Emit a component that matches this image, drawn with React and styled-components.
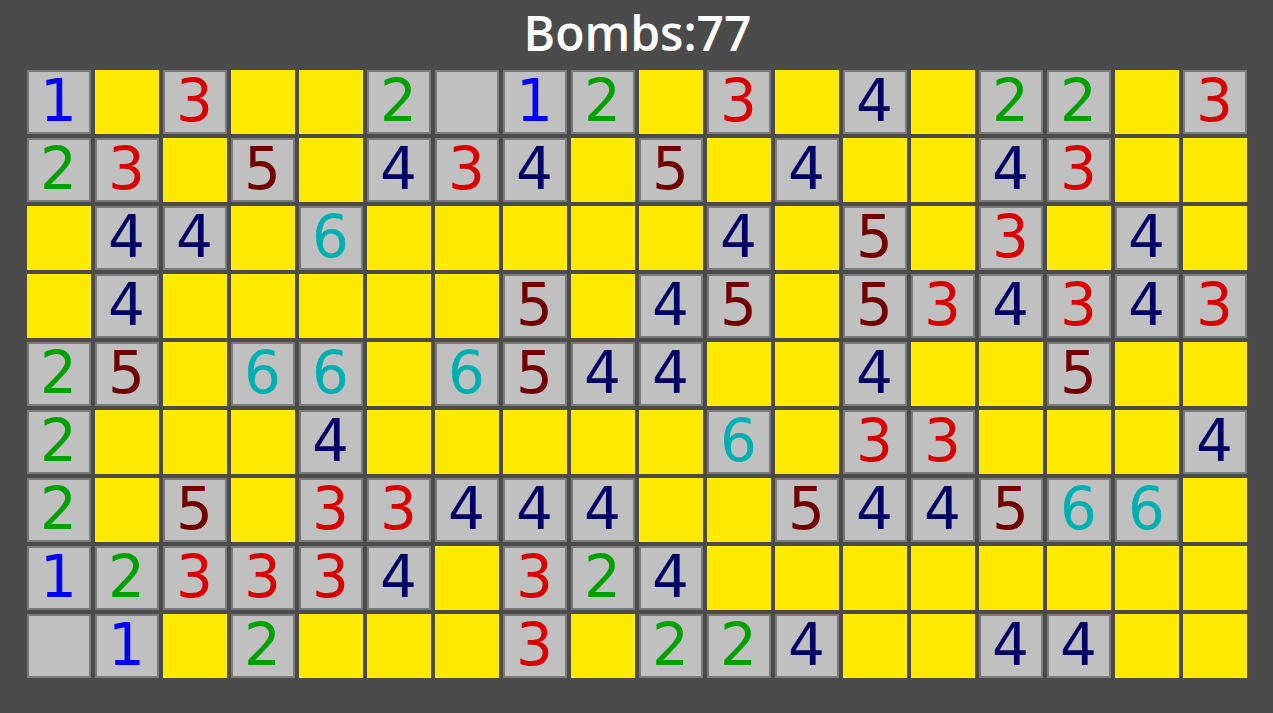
import React from "react";
import styled, { createGlobalStyle } from "styled-components";

const GlobalStyles = createGlobalStyle`
  html, body {
    margin: 0;
    padding: 0;
    background-color: #4b4b4b;
  }
  body {
    font-family: "Open Sans", "Noto Sans", sans-serif;
  }
`;

const Page = styled.div`
  width: 1273px;
  height: 713px;
  display: flex;
  flex-direction: column;
  align-items: center;
  background-color: #4b4b4b;
`;

const Title = styled.h1`
  margin: 0;
  height: 70px;
  line-height: 66px;
  font-size: 48px;
  font-weight: 600;
  color: #ffffff;
  padding-left: 2px;
`;

const Board = styled.div`
  display: grid;
  grid-template-columns: repeat(18, 64px);
  grid-auto-rows: 64px;
  gap: 4px;
`;

const COLORS = {
  1: "#0000ff",
  2: "#00a000",
  3: "#d80000",
  4: "#000066",
  5: "#700000",
  6: "#00b0b0",
};

const Cell = styled.div`
  box-sizing: border-box;
  display: flex;
  align-items: center;
  justify-content: center;
  background-color: ${({ $open }) => ($open ? "#c0c0c0" : "#ffea00")};
  border: ${({ $open }) => ($open ? "2px solid #7a7a7a" : "none")};
  color: ${({ $n }) => COLORS[$n] || "transparent"};
  font-family: "DejaVu Sans", "Liberation Sans", sans-serif;
  font-size: 58px;
  line-height: 1;
  padding-bottom: 2px;
  user-select: none;
`;

// Y = covered, 0 = open without number
const ROWS = [
  "1Y3YY201 2Y3Y4Y22Y3",
  "23Y5Y434Y5Y4YY43YY",
  "Y44Y6YYYYY4Y5Y3Y4Y",
  "Y4YYYYY5Y45Y534343",
  "25Y66Y6544YY4YY5YY",
  "2YYY4YYYYY6Y33YYY4",
  "2Y5Y334 44YY54456 6Y",
  "123334Y324YYYYYYYY",
  "01Y2YYY3Y224YY44YY",
].map((r) => r.replace(/ /g, "").split(""));

export default function App() {
  return (
    <>
      <GlobalStyles />
      <Page>
        <Title>Bombs:77</Title>
        <Board>
          {ROWS.flatMap((row, r) =>
            row.map((c, i) => (
              <Cell key={`${r}-${i}`} $open={c !== "Y"} $n={c}>
                {c !== "Y" && c !== "0" ? c : ""}
              </Cell>
            ))
          )}
        </Board>
      </Page>
    </>
  );
}
